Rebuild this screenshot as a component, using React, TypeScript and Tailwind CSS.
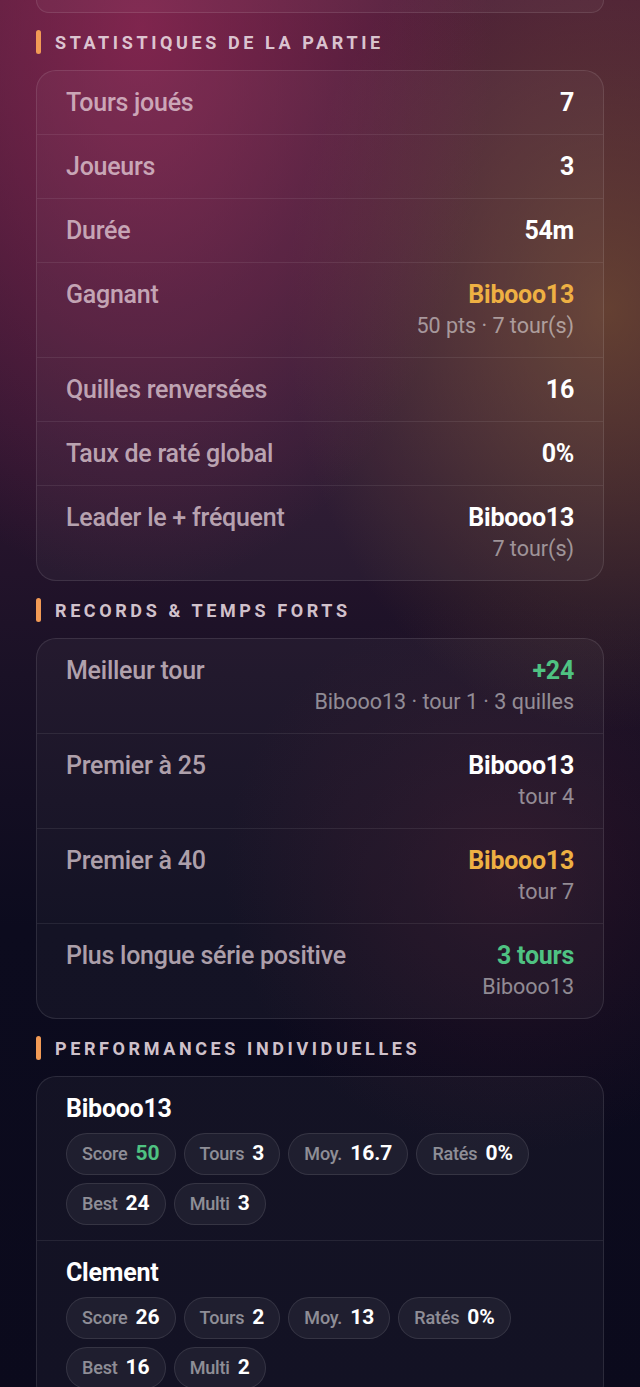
import React from 'react'

type Row = { label: string; value: string; tone?: 'white' | 'gold' | 'green'; sub?: string }

const stats: Row[] = [
  { label: 'Tours joués', value: '7' },
  { label: 'Joueurs', value: '3' },
  { label: 'Durée', value: '54m' },
  { label: 'Gagnant', value: 'Bibooo13', tone: 'gold', sub: '50 pts · 7 tour(s)' },
  { label: 'Quilles renversées', value: '16' },
  { label: 'Taux de raté global', value: '0%' },
  { label: 'Leader le + fréquent', value: 'Bibooo13', sub: '7 tour(s)' },
]

const records: Row[] = [
  { label: 'Meilleur tour', value: '+24', tone: 'green', sub: 'Bibooo13 · tour 1 · 3 quilles' },
  { label: 'Premier à 25', value: 'Bibooo13', sub: 'tour 4' },
  { label: 'Premier à 40', value: 'Bibooo13', tone: 'gold', sub: 'tour 7' },
  { label: 'Plus longue série positive', value: '3 tours', tone: 'green', sub: 'Bibooo13' },
]

const players = [
  {
    name: 'Bibooo13',
    chips: [
      { k: 'Score', v: '50', green: true },
      { k: 'Tours', v: '3' },
      { k: 'Moy.', v: '16.7' },
      { k: 'Ratés', v: '0%' },
      { k: 'Best', v: '24' },
      { k: 'Multi', v: '3' },
    ],
  },
  {
    name: 'Clement',
    chips: [
      { k: 'Score', v: '26' },
      { k: 'Tours', v: '2' },
      { k: 'Moy.', v: '13' },
      { k: 'Ratés', v: '0%' },
      { k: 'Best', v: '16' },
      { k: 'Multi', v: '2' },
    ],
  },
]

const toneClass = {
  white: 'text-white',
  gold: 'text-[#eeb043]',
  green: 'text-[#4fc282]',
}

function SectionTitle({ children }: { children: React.ReactNode }) {
  return (
    <div className="flex items-center gap-[14px] mt-[17px] mb-[16px] h-[24px]">
      <span className="w-[5px] h-[24px] rounded-full bg-[#f29a55]" />
      <h2 className="text-[18px] font-bold tracking-[0.2em] text-[#eadbe2]/90 uppercase">{children}</h2>
    </div>
  )
}

function StatCard({ rows }: { rows: Row[] }) {
  return (
    <div className="rounded-[20px] border border-white/10 bg-white/[0.035] divide-y divide-white/[0.08]">
      {rows.map((r) => (
        <div key={r.label} className="flex justify-between px-[29px] py-[18px]">
          <span className="text-[25px] leading-[27px] font-medium text-[#f1dfe6]/70 tracking-[-0.01em]">{r.label}</span>
          <div className="text-right">
            <div className={`text-[25px] leading-[27px] font-bold tracking-[-0.01em] ${toneClass[r.tone ?? 'white']}`}>{r.value}</div>
            {r.sub && <div className="mt-[4px] text-[21.5px] leading-[27px] text-white/50">{r.sub}</div>}
          </div>
        </div>
      ))}
    </div>
  )
}

export default function App() {
  return (
    <div
      className="min-h-screen overflow-hidden px-[36px] bg-[#0b0a1c] bg-[radial-gradient(ellipse_55%_40%_at_22%_2%,rgba(145,40,85,0.75),transparent_100%),radial-gradient(ellipse_50%_30%_at_95%_22%,rgba(125,85,50,0.65),transparent_100%),radial-gradient(ellipse_45%_20%_at_80%_62%,rgba(70,25,45,0.45),transparent_100%),linear-gradient(to_bottom,#4a1d38_0%,#2e1630_30%,#1a1126_48%,#0c0b1e_66%,#0b0a1c_100%)]"
      style={{ fontFamily: 'Roboto, "Noto Sans", sans-serif' }}
    >
      <div className="h-[13px] rounded-b-[20px] border-x border-b border-white/10 bg-white/[0.035]" />

      <SectionTitle>Statistiques de la partie</SectionTitle>
      <StatCard rows={stats} />

      <SectionTitle>Records &amp; temps forts</SectionTitle>
      <StatCard rows={records} />

      <SectionTitle>Performances individuelles</SectionTitle>
      <div className="rounded-[20px] border border-white/10 bg-white/[0.035] divide-y divide-white/[0.08]">
        {players.map((p) => (
          <div key={p.name} className="px-[29px] pt-[18px] pb-[15px]">
            <div className="text-[25px] leading-[28px] font-bold text-white tracking-[-0.01em]">{p.name}</div>
            <div className="mt-[10px] flex flex-wrap gap-[8px]">
              {p.chips.map((c) => (
                <div
                  key={c.k}
                  className="h-[42px] flex items-center px-[15px] rounded-full border border-white/10 bg-white/[0.05]"
                >
                  <div className="flex items-baseline gap-[8px]">
                    <span className="text-[18px] font-medium text-white/50 tracking-[-0.01em]">{c.k}</span>
                    <span className={`text-[21px] font-bold ${c.green ? 'text-[#4fc282]' : 'text-white'}`}>{c.v}</span>
                  </div>
                </div>
              ))}
            </div>
          </div>
        ))}
      </div>
    </div>
  )
}
